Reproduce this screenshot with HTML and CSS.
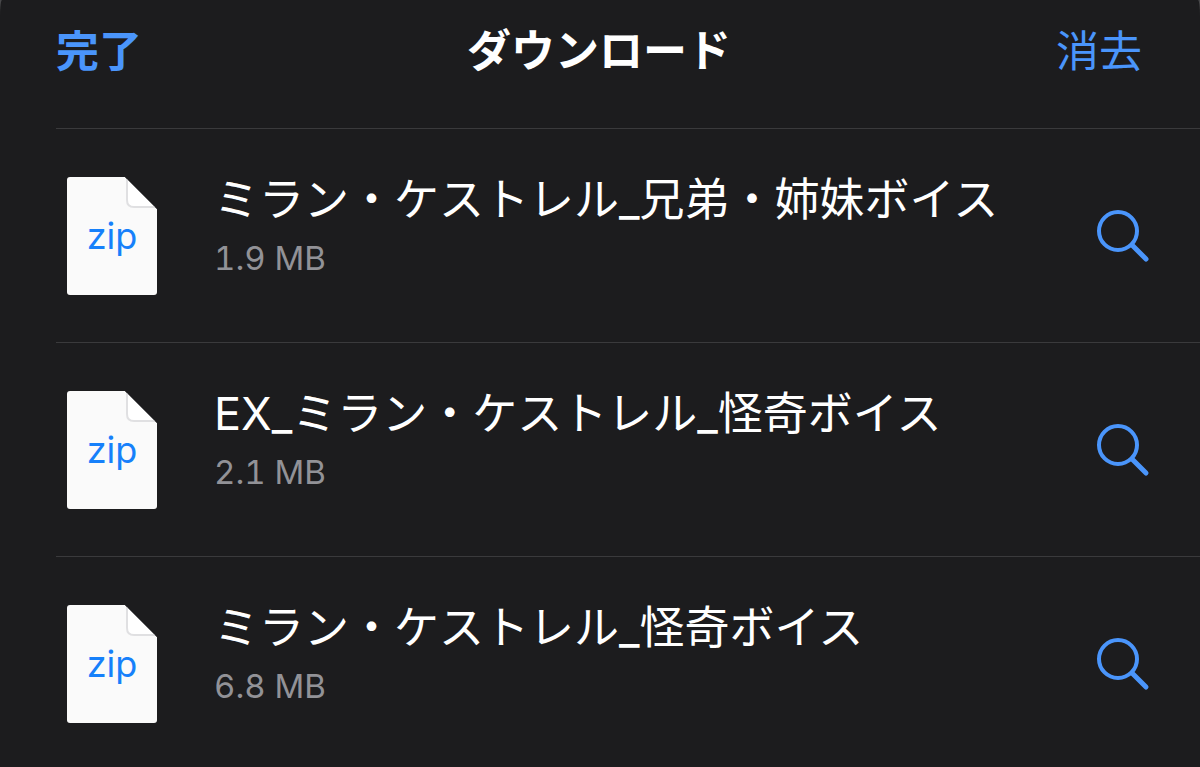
FILE: index.html
```html
<!DOCTYPE html>
<html lang="ja">
<head>
    <meta charset="UTF-8">
    <meta name="viewport" content="width=device-width, initial-scale=1.0">
    <title>ダウンロード</title>
    <link rel="stylesheet" href="styles.css">
</head>
<body>

    <!-- shared icon shapes -->
    <svg class="defs" aria-hidden="true">
        <symbol id="file-icon" viewBox="0 0 90 118">
            <path d="M3 0H58L90 32V115Q90 118 87 118H3Q0 118 0 115V3Q0 0 3 0Z" fill="#fafafa"/>
            <path d="M60 2V23Q60 30 67 30H88" fill="#fff" stroke="#e0e0e2" stroke-width="2"/>
            <path d="M58 0L90 32V0Z" fill="#1c1c1e"/>
        </symbol>
        <symbol id="search-icon" viewBox="0 0 54 54">
            <circle cx="22" cy="22" r="19" fill="none" stroke="currentColor" stroke-width="4"/>
            <path d="M36 36L50 50" stroke="currentColor" stroke-width="5" stroke-linecap="round"/>
        </symbol>
    </svg>

    <div class="sheet">
        <header class="bar">
            <button type="button" class="bar-button done">完了</button>
            <h1>ダウンロード</h1>
            <button type="button" class="bar-button clear">消去</button>
        </header>

        <ul class="downloads">
            <li class="download">
                <div class="file">
                    <svg aria-hidden="true"><use href="#file-icon"/></svg>
                    <span class="ext">zip</span>
                </div>
                <div class="info">
                    <p class="name">ミラン・ケストレル_兄弟・姉妹ボイス</p>
                    <p class="size">1.9 MB</p>
                </div>
                <button type="button" class="reveal" aria-label="表示">
                    <svg aria-hidden="true"><use href="#search-icon"/></svg>
                </button>
            </li>
            <li class="download">
                <div class="file">
                    <svg aria-hidden="true"><use href="#file-icon"/></svg>
                    <span class="ext">zip</span>
                </div>
                <div class="info">
                    <p class="name">EX_ミラン・ケストレル_怪奇ボイス</p>
                    <p class="size">2.1 MB</p>
                </div>
                <button type="button" class="reveal" aria-label="表示">
                    <svg aria-hidden="true"><use href="#search-icon"/></svg>
                </button>
            </li>
            <li class="download">
                <div class="file">
                    <svg aria-hidden="true"><use href="#file-icon"/></svg>
                    <span class="ext">zip</span>
                </div>
                <div class="info">
                    <p class="name">ミラン・ケストレル_怪奇ボイス</p>
                    <p class="size">6.8 MB</p>
                </div>
                <button type="button" class="reveal" aria-label="表示">
                    <svg aria-hidden="true"><use href="#search-icon"/></svg>
                </button>
            </li>
        </ul>
    </div>

</body>
</html>
```
FILE: styles.css
```css
* { box-sizing: border-box; }
body { margin: 0; background: #48484a; color: #fff; font-family: Inter, "Noto Sans CJK JP", sans-serif; }
h1, p, ul { margin: 0; padding: 0; }
button { padding: 0; border: 0; background: none; color: #4a95fb; font: inherit; cursor: pointer; }

.defs { display: none; }
.sheet { min-height: 100vh; background: #1c1c1e; border-radius: 2px 2px 0 0 / 16px 16px 0 0; }

.bar { display: grid; grid-template-columns: 1fr auto 1fr; padding: 21px 58px 47px 56px; line-height: 60px; }
.bar h1 { font-size: 44px; font-weight: 700; }
.bar-button { font-size: 43px; }
.done { justify-self: start; font-weight: 600; }
.clear { justify-self: end; }

.downloads { list-style: none; padding-left: 56px; }
.download { display: flex; align-items: flex-start; padding: 48px 50px 47px 11px; border-top: 1px solid #3a3a3c; }
.download:last-child { padding-bottom: 40px; }

.file { display: grid; width: 90px; height: 118px; }
.file svg, .ext { grid-area: 1 / 1; }
.file svg { width: 100%; height: 100%; }
.ext { place-self: center; color: #1680fa; font-size: 36px; }

.info { flex: 1; margin-left: 57px; }
.name { font-size: 45px; line-height: 46px; }
.size { margin-top: 14px; color: #929297; font-size: 33px; line-height: 42px; font-variant-numeric: tabular-nums; }

.reveal { display: flex; align-self: flex-start; margin-top: 32px; }
.reveal svg { width: 54px; height: 54px; }
```
